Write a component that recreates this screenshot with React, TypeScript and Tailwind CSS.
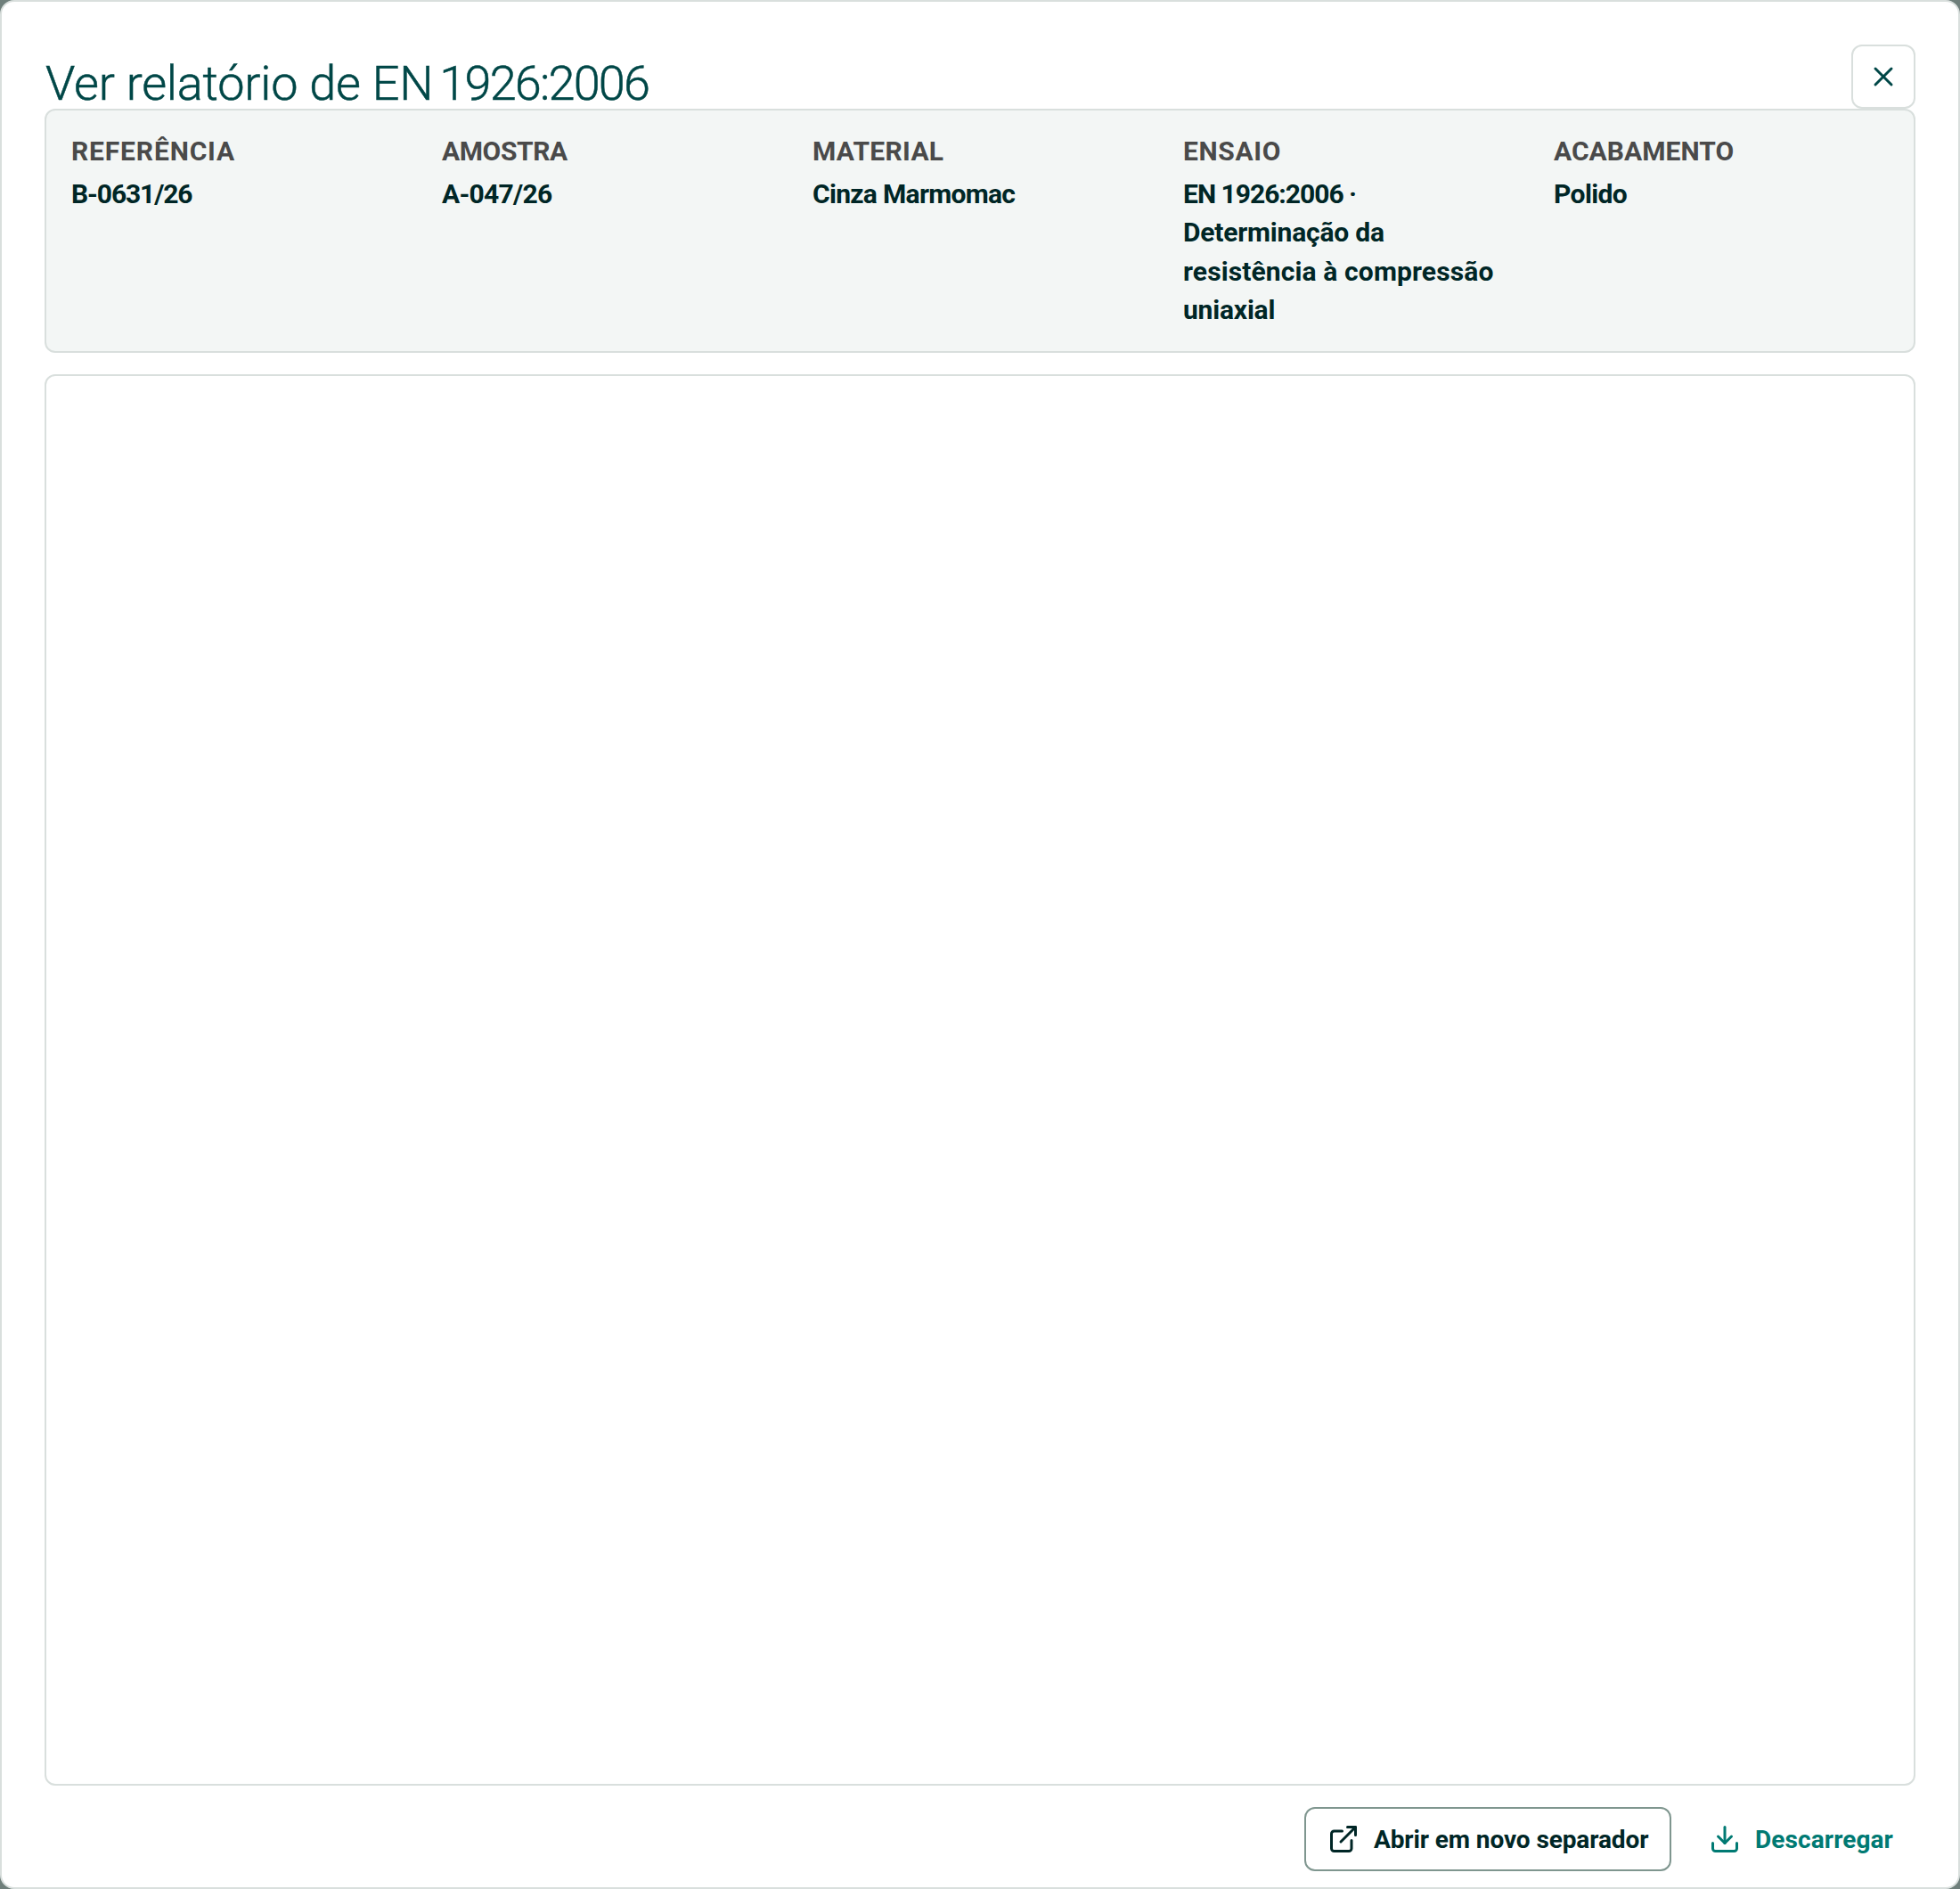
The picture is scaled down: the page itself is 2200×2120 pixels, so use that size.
import React from 'react';
import { Download, ExternalLink, X } from 'lucide-react';

interface Field {
  label: string;
  value: React.ReactNode;
  labelClass: string;
  valueClass: string;
}

const fields: Field[] = [
  { label: 'Referência', value: 'B-0631/26', labelClass: 'tracking-[0.85px]', valueClass: 'tracking-[-1.1px]' },
  { label: 'Amostra', value: 'A-047/26', labelClass: 'tracking-[-0.4px]', valueClass: 'tracking-[-0.7px]' },
  { label: 'Material', value: 'Cinza Marmomac', labelClass: 'tracking-[0.3px]', valueClass: 'tracking-[-0.7px]' },
  {
    label: 'Ensaio',
    value: (
      <>
        <span className="tracking-[-1px]">EN 1926:2006 ·</span> Determinação da{' '}
        <span className="tracking-[0.12px]">resistência à compressão</span> uniaxial
      </>
    ),
    labelClass: 'tracking-[0.65px]',
    valueClass: 'tracking-[-0.2px]',
  },
  { label: 'Acabamento', value: 'Polido', labelClass: 'tracking-[0.05px]', valueClass: 'tracking-[-0.6px]' },
];

const App: React.FC = () => {
  return (
    <div className="w-[2200px] h-[2120px] bg-[#6f7f7b] font-[Roboto,'Liberation_Sans',sans-serif]">
      <div className="flex flex-col w-full h-full bg-white border-2 border-[#d9dfdd] rounded-[16px] px-[48px] pt-[48px] pb-[18px]">
        <header className="flex justify-between h-[72px] shrink-0">
          <h1 className="pl-px text-[54px] leading-[87px] font-light tracking-[-0.2px] text-[#004747] whitespace-nowrap [-webkit-text-stroke:0.5px_#004747]">
            Ver relatório de EN <span className="-ml-[6px] tracking-[-1.8px]">1926:2006</span>
          </h1>
          <button type="button" className="flex items-center justify-center w-[72px] h-[72px] border-2 border-[#d9dfdd] rounded-[12px] text-[#004747]">
            <X className="w-9 h-9" />
          </button>
        </header>

        <dl className="grid grid-cols-5 gap-x-10 h-[274px] shrink-0 px-[28px] pt-[24px] bg-[#f3f6f5] border-2 border-[#d9dfdd] rounded-[12px]">
          {fields.map((field) => (
            <div key={field.label}>
              <dt className={`text-[30px] leading-[44px] font-bold uppercase text-[#4a4a4a] ${field.labelClass}`}>{field.label}</dt>
              <dd className={`mt-[4px] text-[30px] leading-[43.4px] font-bold text-[#002626] ${field.valueClass}`}>{field.value}</dd>
            </div>
          ))}
        </dl>

        <div className="mt-[24px] grow bg-white border-2 border-[#d9dfdd] rounded-[12px]" />

        <footer className="flex justify-end mt-[24px] shrink-0">
          <button type="button" className="flex items-center h-[72px] w-[412px] pl-[24px] border-2 border-[#7f968f] rounded-[12px] text-[#002626]">
            <ExternalLink className="w-9 h-9" />
            <span className="ml-[16px] pt-px text-[28px] font-bold tracking-[-0.1px] whitespace-nowrap">Abrir em novo separador</span>
          </button>
          <button type="button" className="flex items-center h-[72px] w-[250px] ml-[24px] pl-[18px] text-[#007a73]">
            <Download className="w-9 h-9" />
            <span className="ml-[16px] pt-px text-[28px] font-bold tracking-[0.1px] whitespace-nowrap">Descarregar</span>
          </button>
        </footer>
      </div>
    </div>
  );
};

export default App;
